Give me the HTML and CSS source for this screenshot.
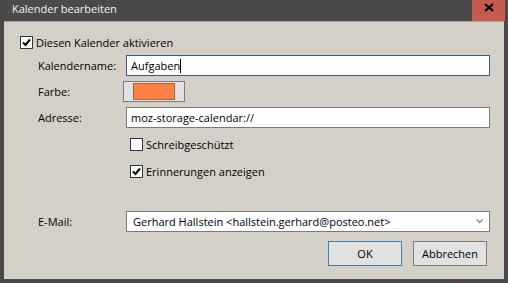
FILE: index.html
```html
<!DOCTYPE html>
<html lang="de">
<head>
    <meta charset="UTF-8">
    <title>Kalender bearbeiten</title>
    <link rel="stylesheet" href="styles.css">
</head>
<body>
    <div class="window">
        <div class="titlebar">
            <span class="title">Kalender bearbeiten</span>
            <span class="close">
                <svg width="10" height="9" viewBox="0 0 10 9">
                    <path d="M1 1 L9 8 M9 1 L1 8" stroke="#000" stroke-width="2.2" fill="none"/>
                </svg>
            </span>
        </div>

        <div class="dialog">
            <div class="check-row enable">
                <span class="box"><svg width="11" height="11" viewBox="0 0 11 11"><path d="M2 5.5 L4.5 8 L9 2.5" stroke="#000" stroke-width="2" fill="none"/></svg></span>
                <span>Diesen Kalender aktivieren</span>
            </div>

            <div class="form">
                <div class="row">
                    <span class="label">Kalendername:</span>
                    <div class="field focused">Aufgaben<span class="caret"></span></div>
                </div>
                <div class="row">
                    <span class="label">Farbe:</span>
                    <div class="color-btn"><span class="swatch"></span></div>
                </div>
                <div class="row">
                    <span class="label">Adresse:</span>
                    <div class="field">moz-storage-calendar://</div>
                </div>
                <div class="row opt first">
                    <span></span>
                    <div class="check-row">
                        <span class="box"></span>
                        <span>Schreibgeschützt</span>
                    </div>
                </div>
                <div class="row opt second">
                    <span></span>
                    <div class="check-row">
                        <span class="box"><svg width="11" height="11" viewBox="0 0 11 11"><path d="M2 5.5 L4.5 8 L9 2.5" stroke="#000" stroke-width="2" fill="none"/></svg></span>
                        <span>Erinnerungen anzeigen</span>
                    </div>
                </div>
                <div class="row mail">
                    <span class="label">E-Mail:</span>
                    <div class="field select">
                        <span>Gerhard Hallstein &lt;hallstein.gerhard@posteo.net&gt;</span>
                        <svg width="7" height="5" viewBox="0 0 7 5"><path d="M0.5 0.5 L3.5 3.5 L6.5 0.5" stroke="#8a8a8a" stroke-width="1.3" fill="none"/></svg>
                    </div>
                </div>
            </div>

            <div class="buttons">
                <button class="btn default">OK</button>
                <button class="btn">Abbrechen</button>
            </div>
        </div>
    </div>
</body>
</html>
```

FILE: styles.css
```css
* {
    margin: 0;
    padding: 0;
    box-sizing: border-box;
}

body {
    font-family: "Open Sans", "Noto Sans", sans-serif;
    font-size: 11px;
    color: #000;
    background: #4a4a4a;
}

.window {
    width: 508px;
    height: 283px;
    display: flex;
    flex-direction: column;
    background-color: #4a4a4a;
}

.titlebar {
    height: 21px;
    display: flex;
    justify-content: space-between;
}

.title {
    color: #f2f2f2;
    padding: 1px 0 0 12px;
    line-height: 16px;
}

.close {
    width: 33px;
    height: 21px;
    margin-right: 3px;
    background-color: #c75b4f;
    display: flex;
    justify-content: center;
    padding-top: 3px;
}

.dialog {
    flex: 1;
    margin: 0 4px 4px;
    background-color: #d4d0c8;
    border-top: 1px solid #a9a69f;
    padding: 13px 14px 0 16px;
}

.check-row {
    display: flex;
    align-items: center;
    gap: 3px;
    height: 15px;
}

.box {
    width: 13px;
    height: 13px;
    border: 1px solid #333;
    background-color: #fff;
    display: flex;
    align-items: center;
    justify-content: center;
}

.form {
    display: flex;
    flex-direction: column;
    gap: 5px;
    margin: 5px 0 0 18px;
}

.row {
    display: grid;
    grid-template-columns: 88px 364px;
    align-items: center;
}

.field {
    height: 21px;
    background-color: #fff;
    border: 1px solid #7a7a7a;
    padding: 0 4px;
    line-height: 19px;
    display: flex;
    align-items: center;
}

.field.focused {
    border-color: #335f86;
}

.caret {
    width: 1px;
    height: 14px;
    background-color: #000;
}

.color-btn {
    width: 62px;
    height: 21px;
    margin-left: -3px;
    border: 1px solid #7a7a7a;
    background-color: #e1e1e1;
    padding: 1px 9px;
}

.swatch {
    display: block;
    height: 17px;
    border: 1px solid #9a6a4f;
    background-color: #ff8040;
}

.opt .check-row {
    padding-left: 4px;
}

.opt.first {
    margin-top: 4px;
}

.opt.second {
    margin-top: 7px;
}

.mail {
    margin-top: 27px;
}

.select {
    justify-content: space-between;
    padding: 0 6px 0 6px;
}

.buttons {
    display: flex;
    justify-content: flex-end;
    gap: 11px;
    margin: 9px 3px 0 0;
}

.btn {
    width: 74px;
    height: 25px;
    font: inherit;
    color: #000;
    background-color: #e1e1e1;
    border: 1px solid #7a7a7a;
}

.btn.default {
    border-color: #3c7fb1;
}
```
